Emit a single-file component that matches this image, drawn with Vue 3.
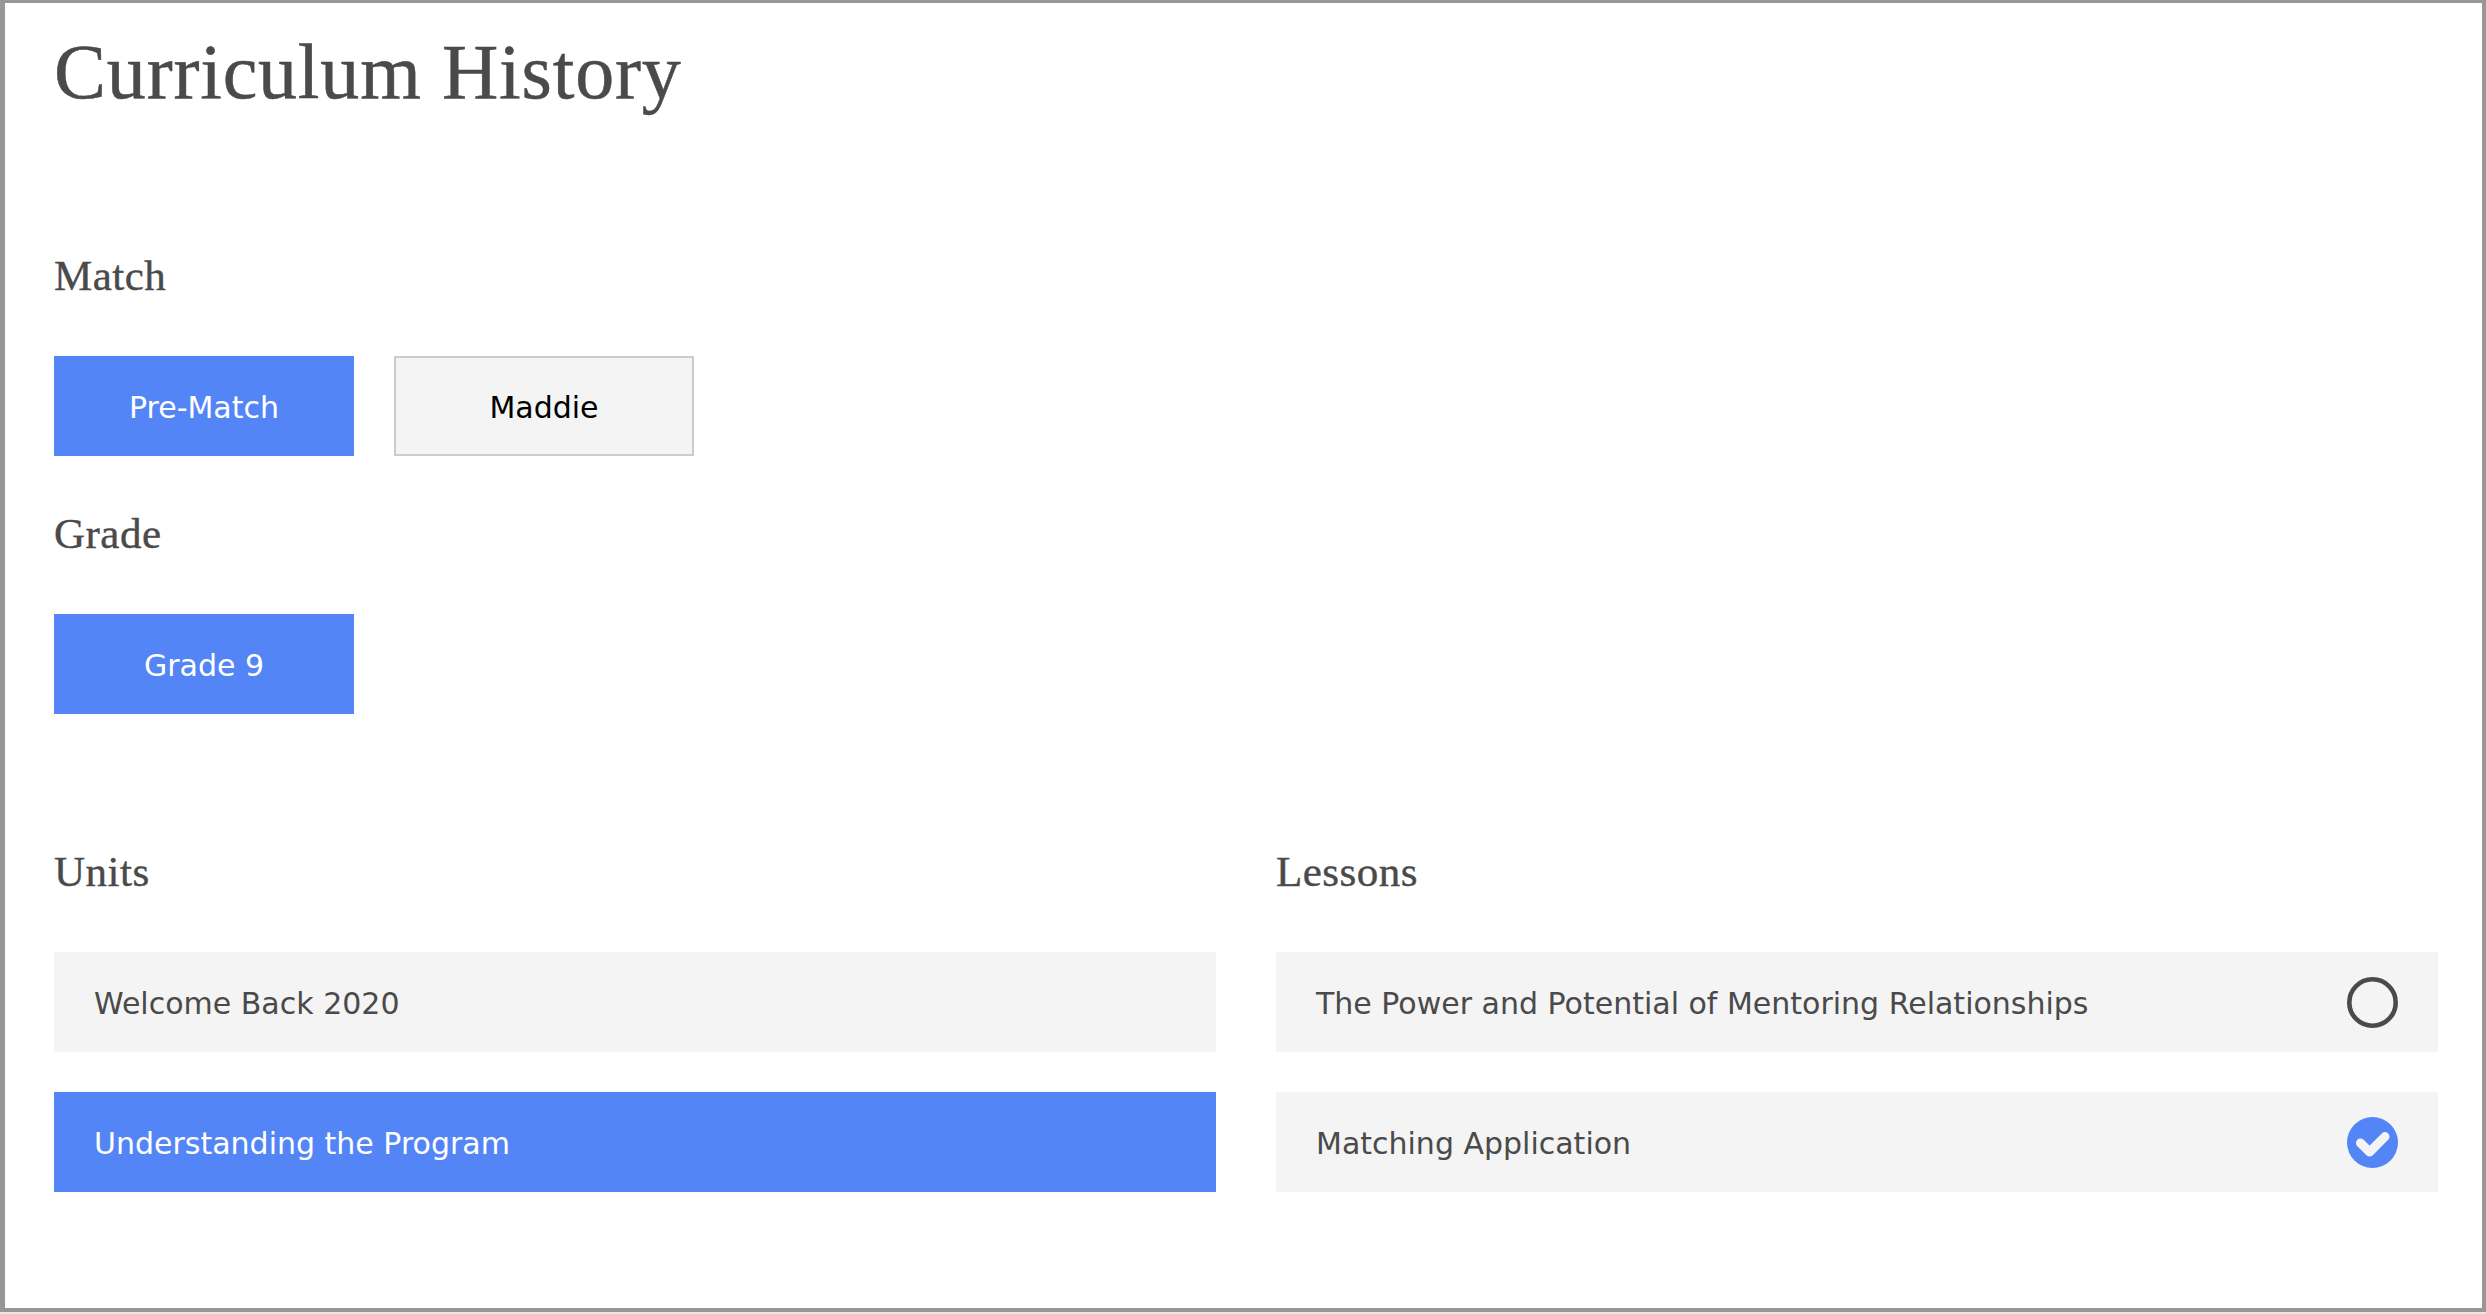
<script setup>
const units = [
  { label: 'Welcome Back 2020', active: false },
  { label: 'Understanding the Program', active: true },
]
const lessons = [
  { label: 'The Power and Potential of Mentoring Relationships', done: false },
  { label: 'Matching Application', done: true },
]
</script>

<template>
  <main class="page">
    <h1 class="title">Curriculum History</h1>

    <h2 class="label match-label">Match</h2>
    <div class="buttons">
      <button class="choice active">Pre-Match</button>
      <button class="choice">Maddie</button>
    </div>

    <h2 class="label grade-label">Grade</h2>
    <div class="buttons">
      <button class="choice active">Grade 9</button>
    </div>

    <section class="columns">
      <div class="column">
        <h2 class="label">Units</h2>
        <div class="rows">
          <div v-for="u in units" :key="u.label" class="row" :class="{ active: u.active }"><span class="row-text">{{ u.label }}</span></div>
        </div>
      </div>
      <div class="column">
        <h2 class="label">Lessons</h2>
        <div class="rows">
          <div v-for="l in lessons" :key="l.label" class="row">
            <span class="row-text">{{ l.label }}</span>
            <svg v-if="l.done" class="status" viewBox="0 0 51 51" aria-hidden="true">
              <circle cx="25.5" cy="25.5" r="25.5" fill="#5485f6" />
              <polyline points="13.5,26 22.6,35 38,19.6" fill="none" stroke="#f4f4f4" stroke-width="9" stroke-linecap="round" stroke-linejoin="round" />
            </svg>
            <svg v-else class="status" viewBox="0 0 51 51" aria-hidden="true">
              <circle cx="25.5" cy="25.5" r="23.2" fill="none" stroke="#4a4a4a" stroke-width="4.6" />
            </svg>
          </div>
        </div>
      </div>
    </section>
  </main>
</template>

<style>
html, body { margin: 0; background: #e8e8e8; }
</style>

<style scoped>
.page {
  box-sizing: border-box;
  width: 2486px;
  height: 1312px;
  border-style: solid;
  border-color: #979797;
  border-width: 3px 4px 4px 5px;
  padding: 0 44px 0 49px;
  color: #4a4a4a;
  font-family: "DejaVu Sans", sans-serif;
  background: #fff;
}
.title {
  margin: 0;
  padding-top: 27px;
  font: 400 78px/84px "Liberation Serif", serif;
  letter-spacing: 0.8px;
  -webkit-text-stroke: 0.5px #4a4a4a;
}
.label {
  margin: 0;
  font: 400 43px/50px "Liberation Serif", serif;
  letter-spacing: 0.5px;
  -webkit-text-stroke: 0.4px #4a4a4a;
}
.match-label { margin-top: 137px; }
.grade-label { margin-top: 53px; }
.buttons {
  display: flex;
  gap: 40px;
  margin-top: 55px;
}
.choice {
  box-sizing: border-box;
  width: 300px;
  height: 100px;
  padding: 2px 0 0;
  border: 2px solid #ccc;
  background: #f4f4f4;
  color: #000;
  font: 400 30px "DejaVu Sans", sans-serif;
}
.choice.active {
  border: 0;
  background: #5485f6;
  color: #fff;
}
.columns {
  display: grid;
  grid-template-columns: 1162px 1162px;
  gap: 60px;
  margin-top: 133px;
}
.rows {
  display: flex;
  flex-direction: column;
  gap: 40px;
  margin-top: 55px;
}
.row {
  box-sizing: border-box;
  display: flex;
  align-items: center;
  justify-content: space-between;
  height: 100px;
  padding: 0 40px;
  background: #f4f4f4;
  font-size: 30px;
}
.row-text {
  padding-top: 2px;
}
.row.active {
  background: #5485f6;
  color: #fff;
}
.status {
  width: 51px;
  height: 51px;
  flex: none;
}
</style>
